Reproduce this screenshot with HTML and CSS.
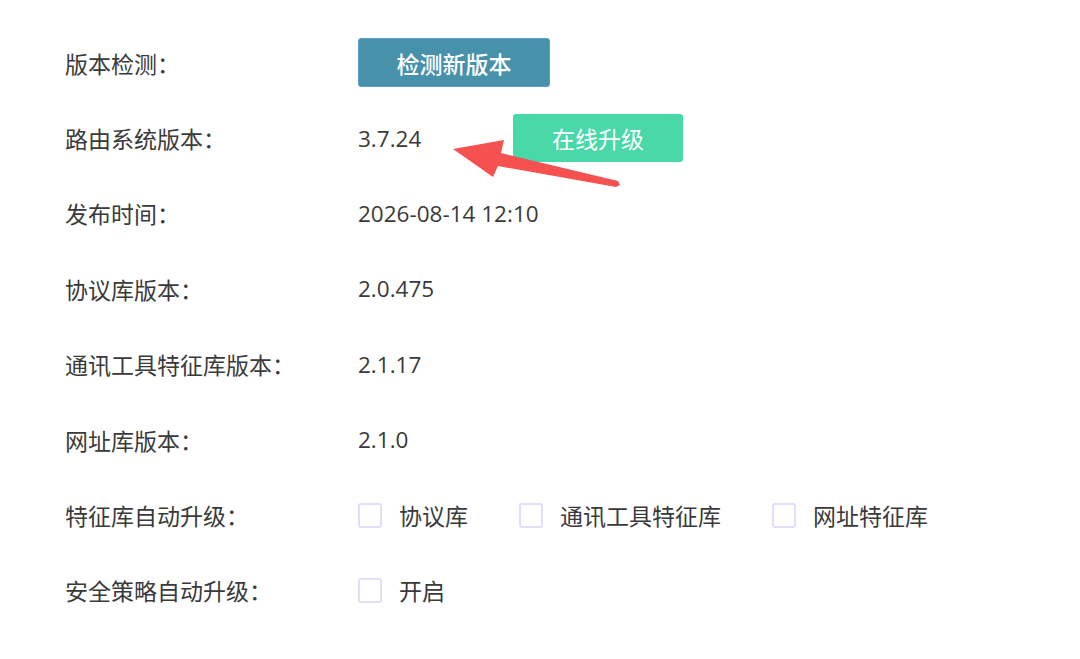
FILE: index.html
```html
<!DOCTYPE html>
<html lang="zh-CN">
<head>
<meta charset="utf-8">
<title>版本信息</title>
<link rel="stylesheet" href="styles.css">
</head>
<body>
<div class="page">
  <div class="form">
    <div class="row">
      <div class="label">版本检测：</div>
      <div class="value"><button class="btn btn-check">检测新版本</button></div>
    </div>
    <div class="row">
      <div class="label">路由系统版本：</div>
      <div class="value"><span class="ver num">3.7.24</span><button class="btn btn-upgrade">在线升级</button></div>
    </div>
    <div class="row">
      <div class="label">发布时间：</div>
      <div class="value num">2026-08-14 12:10</div>
    </div>
    <div class="row">
      <div class="label">协议库版本：</div>
      <div class="value num">2.0.475</div>
    </div>
    <div class="row">
      <div class="label">通讯工具特征库版本：</div>
      <div class="value num">2.1.17</div>
    </div>
    <div class="row">
      <div class="label">网址库版本：</div>
      <div class="value num">2.1.0</div>
    </div>
    <div class="row">
      <div class="label">特征库自动升级：</div>
      <div class="value checks">
        <label class="check"><span class="box"></span><span>协议库</span></label>
        <label class="check"><span class="box"></span><span>通讯工具特征库</span></label>
        <label class="check"><span class="box"></span><span>网址特征库</span></label>
      </div>
    </div>
    <div class="row">
      <div class="label">安全策略自动升级：</div>
      <div class="value checks">
        <label class="check"><span class="box"></span><span>开启</span></label>
      </div>
    </div>
  </div>
  <svg class="arrow" width="1080" height="659" viewBox="0 0 1080 659">
    <polygon points="453,149 504,140 501,153 618,181 620,185 616,187 498,166 493,177" fill="#f55151"/>
  </svg>
</div>
</body>
</html>
```

FILE: styles.css
```css
html, body {
  margin: 0;
  padding: 0;
  background: #ffffff;
}
body {
  font-family: "Noto Sans CJK SC", "Noto Sans", sans-serif;
  font-size: 23px;
  color: #3a3a3a;
}
.page {
  position: relative;
  width: 1080px;
  height: 659px;
  overflow: hidden;
}
.form {
  padding: 25px 0 0 65px;
}
.row {
  display: flex;
  align-items: center;
  height: 75.4px;
}
.label {
  width: 293px;
  flex: none;
  white-space: nowrap;
}
.value {
  display: flex;
  align-items: center;
  white-space: nowrap;
}
.num {
  font-family: "Open Sans", "Noto Sans CJK SC", sans-serif;
  font-size: 22.5px;
}
.ver {
  width: 155px;
}
.btn {
  font-family: "Noto Sans CJK SC", sans-serif;
  font-size: 23px;
  color: #ffffff;
  border: none;
  border-radius: 3px;
  padding: 0;
  cursor: pointer;
  display: flex;
  align-items: center;
  justify-content: center;
}
.btn-check {
  width: 192px;
  height: 49px;
  background: #4891ab;
  border: 1px solid #5b9fd0;
  font-weight: 500;
}
.btn-upgrade {
  width: 170px;
  height: 48px;
  background: #49d9a9;
}
.checks {
  gap: 51px;
}
.check {
  display: flex;
  align-items: center;
  gap: 17px;
}
.box {
  width: 24px;
  height: 25px;
  box-sizing: border-box;
  border: 2px solid #dfdffb;
  border-radius: 3px;
  background: #ffffff;
}
.arrow {
  position: absolute;
  left: 0;
  top: 0;
  pointer-events: none;
}
```
